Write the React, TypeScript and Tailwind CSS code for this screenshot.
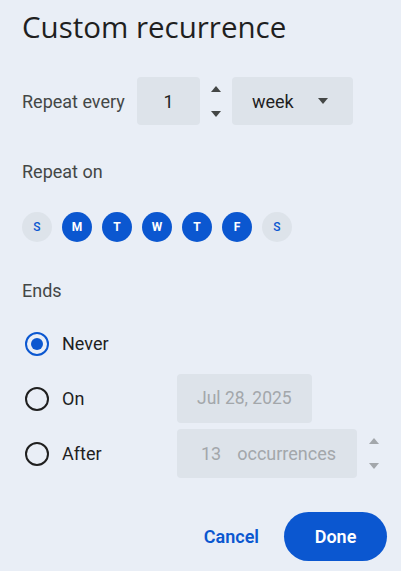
import React from "react";

const Up = ({ c = "#444746" }: { c?: string }) => (
  <svg width="10" height="6" viewBox="0 0 10 6"><path d="M0 6 L5 0 L10 6 Z" fill={c} /></svg>
);
const Down = ({ c = "#444746" }: { c?: string }) => (
  <svg width="10" height="6" viewBox="0 0 10 6"><path d="M0 0 L5 6 L10 0 Z" fill={c} /></svg>
);

const days = [
  { l: "S", on: false },
  { l: "M", on: true },
  { l: "T", on: true },
  { l: "W", on: true },
  { l: "T", on: true },
  { l: "F", on: true },
  { l: "S", on: false },
];

function Radio({ checked }: { checked?: boolean }) {
  return (
    <div
      className={`w-[24px] h-[24px] shrink-0 rounded-full border-2 flex items-center justify-center ${
        checked ? "border-[#0B57D0]" : "border-[#1F1F1F]"
      }`}
    >
      {checked && <div className="w-[12px] h-[12px] rounded-full bg-[#0B57D0]" />}
    </div>
  );
}

export default function App() {
  return (
    <div
      className="w-[401px] h-[571px] bg-[#E9EEF6] pl-[22px] pr-[14px] flex flex-col overflow-hidden"
      style={{ fontFamily: "Roboto, 'Open Sans', sans-serif" }}
    >
      <h1
        className="mt-[8px] text-[29.5px] leading-[38px] text-[#1F1F1F] whitespace-nowrap"
        style={{ fontFamily: "'Open Sans', Roboto, sans-serif" }}
      >
        Custom recurrence
      </h1>

      <div className="mt-[31px] flex items-center h-[48px]">
        <div className="w-[115px] shrink-0 text-[18px] text-[#444746] whitespace-nowrap">Repeat every</div>
        <div className="w-[63px] h-[48px] shrink-0 rounded-[4px] bg-[#DDE3EA] flex items-center justify-center text-[18px] text-[#1F1F1F]">
          1
        </div>
        <div className="w-[32px] h-[48px] shrink-0 flex flex-col items-center justify-center gap-[19px]">
          <Up />
          <Down />
        </div>
        <div className="w-[121px] h-[48px] shrink-0 rounded-[4px] bg-[#DDE3EA] flex items-center pl-[20px] pr-[25px] justify-between text-[18px] text-[#1F1F1F]">
          <span>week</span>
          <Down />
        </div>
      </div>

      <div className="mt-[35px] text-[18px] leading-[24px] text-[#444746]">Repeat on</div>

      <div className="mt-[28px] flex gap-[10px]">
        {days.map((d, i) => (
          <div
            key={i}
            className={`w-[30px] h-[30px] rounded-full flex items-center justify-center text-[12px] ${
              d.on ? "bg-[#0B57D0] text-white font-bold" : "bg-[#DDE3EA] text-[#0B57D0] font-medium"
            }`}
          >
            {d.l}
          </div>
        ))}
      </div>

      <div className="mt-[37px] text-[18px] leading-[24px] text-[#444746]">Ends</div>

      <div className="mt-[16px] flex flex-col gap-[6px]">
        <div className="h-[49px] flex items-center">
          <div className="w-[155px] shrink-0 flex items-center gap-[13px] pl-[3px]">
            <Radio checked />
            <span className="text-[18px] text-[#1F1F1F]">Never</span>
          </div>
        </div>
        <div className="h-[49px] flex items-center">
          <div className="w-[155px] shrink-0 flex items-center gap-[13px] pl-[3px]">
            <Radio />
            <span className="text-[18px] text-[#1F1F1F]">On</span>
          </div>
          <div className="w-[135px] h-[49px] shrink-0 rounded-[4px] bg-[#DDE3EA] flex items-center pl-[20px] text-[17.5px] text-[#A3A7AB] whitespace-nowrap">
            Jul 28, 2025
          </div>
        </div>
        <div className="h-[49px] flex items-center">
          <div className="w-[155px] shrink-0 flex items-center gap-[13px] pl-[3px]">
            <Radio />
            <span className="text-[18px] text-[#1F1F1F]">After</span>
          </div>
          <div className="w-[180px] h-[49px] shrink-0 rounded-[4px] bg-[#DDE3EA] flex items-center pl-[24px] gap-[16px] text-[18px] text-[#A3A7AB] whitespace-nowrap">
            <span>13</span>
            <span>occurrences</span>
          </div>
          <div className="w-[34px] h-[49px] shrink-0 flex flex-col items-center justify-center gap-[19px]">
            <Up c="#A3A7AB" />
            <Down c="#A3A7AB" />
          </div>
        </div>
      </div>

      <div className="mt-[34px] flex justify-end items-center gap-[25px]">
        <button className="text-[18px] font-semibold text-[#0B57D0]">Cancel</button>
        <button className="w-[103px] h-[49px] rounded-full bg-[#0B57D0] text-white text-[18px] font-semibold">
          Done
        </button>
      </div>
    </div>
  );
}
